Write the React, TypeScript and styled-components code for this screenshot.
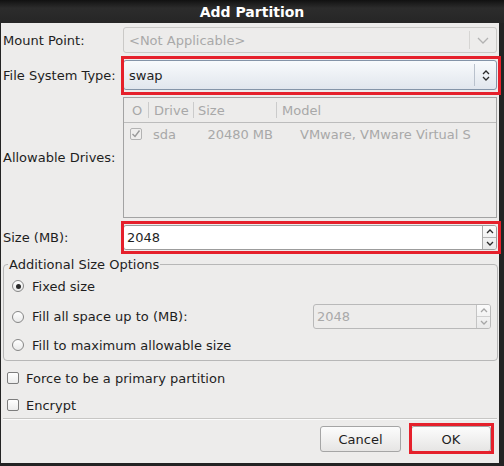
import styled, { createGlobalStyle, css } from "styled-components";

const GlobalStyle = createGlobalStyle`
  html, body {
    margin: 0;
    padding: 0;
    background: #1c1c1c;
  }
  body {
    font-family: "DejaVu Sans", "Noto Sans", sans-serif;
    font-size: 13px;
  }
`;

// red annotation box drawn over a control; inset is "top right bottom left"
const markedCss = (inset?: string) =>
  inset
    ? css`
        position: relative;
        &::after {
          content: "";
          position: absolute;
          inset: ${inset};
          border: 3px solid #e5202b;
          pointer-events: none;
        }
      `
    : "";

const Window = styled.div`
  width: 504px;
  height: 466px;
  box-sizing: border-box;
  display: flex;
  flex-direction: column;
  background: #232323;
  padding: 0 5px 3px 1px;
`;

const TitleBar = styled.div`
  height: 23px;
  flex: none;
  margin: 0 -5px 0 -1px;
  display: flex;
  align-items: center;
  justify-content: center;
  background: linear-gradient(#111111, #2c2c2c 35%, #262626);
  color: #ffffff;
  font-weight: bold;
  font-size: 14px;
`;

const Body = styled.div`
  flex: 1;
  display: flex;
  flex-direction: column;
  background: #edeceb;
  color: #1e1e1e;
  padding: 4px 2px 0 2px;
`;

const FormGrid = styled.div`
  display: grid;
  grid-template-columns: 120px 1fr;
  grid-template-rows: 26px 30px 121px 25px;
  row-gap: 7px;
`;

const Label = styled.div`
  display: flex;
  align-items: center;
  white-space: nowrap;
`;

const Combo = styled.div<{ $disabled?: boolean; $mark?: string }>`
  display: flex;
  align-items: stretch;
  box-sizing: border-box;
  border: 1px solid ${(p) => (p.$disabled ? "#cac9c7" : "#8494a8")};
  border-radius: 3px;
  background: ${(p) =>
    p.$disabled ? "#edeceb" : "linear-gradient(#f8fafc, #e1e6ed)"};
  color: ${(p) => (p.$disabled ? "#a9a9a9" : "#1e1e1e")};
  ${(p) => markedCss(p.$mark)}
`;

const ComboText = styled.div`
  flex: 1;
  display: flex;
  align-items: center;
  padding-left: 5px;
`;

const ComboArrow = styled.div<{ $width: number; $disabled?: boolean }>`
  width: ${(p) => p.$width}px;
  display: flex;
  align-items: center;
  justify-content: center;
  border-left: 1px solid ${(p) => (p.$disabled ? "#d6d5d3" : "#b9c1cc")};
  margin: 3px 0;
`;

const StackedArrows = styled.div`
  display: flex;
  flex-direction: column;
  gap: 1px;
`;

const Drives = styled.div`
  border: 1px solid #a3a3a3;
  background: #edeceb;
  color: #a8a8a8;
  display: flex;
  flex-direction: column;
`;

const DriveHeader = styled.div`
  height: 24px;
  display: grid;
  grid-template-columns: 24px 45px 83px 1fr;
  border-bottom: 1px solid #bcbcbc;
`;

const HeaderCell = styled.div<{ $first?: boolean; $pad?: number }>`
  display: flex;
  align-items: center;
  padding-left: ${(p) => p.$pad ?? 5}px;
  border-left: ${(p) => (p.$first ? "none" : "1px solid #cbcbcb")};
  margin: 4px 0;
`;

const DriveRow = styled.div`
  height: 22px;
  display: grid;
  grid-template-columns: 24px 45px 83px 1fr;
  align-items: center;
`;

const RowCell = styled.div<{ $align?: string; $pad?: number }>`
  display: flex;
  justify-content: ${(p) => p.$align ?? "flex-start"};
  padding-left: ${(p) => p.$pad ?? 5}px;
  padding-right: ${(p) => (p.$align === "flex-end" ? 3 : 0)}px;
  white-space: nowrap;
  overflow: hidden;
`;

const CheckBox = styled.div<{ $disabled?: boolean }>`
  width: 12px;
  height: 12px;
  box-sizing: border-box;
  border: 1px solid ${(p) => (p.$disabled ? "#b3b3b3" : "#7d7d7d")};
  border-radius: 2px;
  background: ${(p) =>
    p.$disabled ? "#efeeed" : "linear-gradient(#ffffff, #ececec)"};
  display: flex;
  align-items: center;
  justify-content: center;
  flex: none;
`;

const Spin = styled.div<{ $disabled?: boolean; $mark?: string }>`
  display: flex;
  box-sizing: border-box;
  border: 1px solid ${(p) => (p.$disabled ? "#b9b9b9" : "#9c9c9c")};
  border-radius: 3px;
  background: ${(p) => (p.$disabled ? "#edeceb" : "#ffffff")};
  color: ${(p) => (p.$disabled ? "#a9a9a9" : "#1e1e1e")};
  ${(p) => markedCss(p.$mark)}
`;

const SpinText = styled.div`
  flex: 1;
  display: flex;
  align-items: center;
  padding-left: 3px;
`;

const SpinButtons = styled.div<{ $disabled?: boolean }>`
  width: 13px;
  display: flex;
  flex-direction: column;
  border-left: 1px solid ${(p) => (p.$disabled ? "#c4c4c4" : "#a9a9a9")};
  background: linear-gradient(#fbfbfb, #e9e9e9);
  border-radius: 0 2px 2px 0;
`;

const SpinButton = styled.div<{ $top?: boolean; $disabled?: boolean }>`
  flex: 1;
  display: flex;
  align-items: center;
  justify-content: center;
  border-bottom: ${(p) =>
    p.$top ? `1px solid ${p.$disabled ? "#d0d0d0" : "#b4b4b4"}` : "none"};
`;

const Frame = styled.fieldset`
  margin: 7px -1px 0 0;
  border: 1px solid #b7b7b7;
  border-radius: 4px;
  padding: 4px 6px 5px 8px;
  display: flex;
  flex-direction: column;
`;

const Legend = styled.legend`
  padding: 0 1px;
  margin-left: -4px;
  line-height: 15px;
  color: #1e1e1e;
`;

const OptionRow = styled.div<{ $height?: number; $space?: number }>`
  height: ${(p) => p.$height ?? 20}px;
  margin-top: ${(p) => p.$space ?? 0}px;
  display: flex;
  align-items: center;
  gap: 8px;
  white-space: nowrap;
`;

const Radio = styled.div<{ $checked?: boolean }>`
  width: 12px;
  height: 12px;
  box-sizing: border-box;
  border-radius: 50%;
  border: 1px solid #868686;
  background: linear-gradient(#ffffff, #e9e9e9);
  display: flex;
  align-items: center;
  justify-content: center;
  flex: none;
  &::after {
    content: "";
    width: 5px;
    height: 5px;
    border-radius: 50%;
    background: ${(p) => (p.$checked ? "#2a2a2a" : "transparent")};
  }
`;

const LimitSpin = styled(Spin)`
  margin-left: auto;
  width: 178px;
  height: 25px;
`;

const CheckList = styled.div`
  margin-top: 7px;
  display: flex;
  flex-direction: column;
  gap: 7px;
`;

const CheckRow = styled.div`
  height: 20px;
  display: flex;
  align-items: center;
  gap: 7px;
  padding-left: 4px;
`;

const Separator = styled.div`
  margin-top: 3px;
  border-top: 1px solid #c7c6c4;
  border-bottom: 1px solid #fbfbfb;
`;

const ButtonRow = styled.div`
  margin-top: 6px;
  display: flex;
  justify-content: flex-end;
  gap: 10px;
  padding-right: 6px;
`;

const Button = styled.button<{ $width: number; $mark?: string }>`
  width: ${(p) => p.$width}px;
  height: 26px;
  box-sizing: border-box;
  border: 1px solid #a5a5a5;
  border-radius: 3px;
  background: linear-gradient(#fcfcfc, #e6e5e4);
  font: inherit;
  color: #1e1e1e;
  padding: 0;
  ${(p) => markedCss(p.$mark)}
`;

function Chevron(props: { up?: boolean; color: string; w?: number; h?: number }) {
  const w = props.w ?? 7;
  const h = props.h ?? 4;
  return (
    <svg width={w + 2} height={h + 2} viewBox={`-1 -1 ${w + 2} ${h + 2}`}>
      <path
        d={props.up ? `M0 ${h} L${w / 2} 0 L${w} ${h}` : `M0 0 L${w / 2} ${h} L${w} 0`}
        fill="none"
        stroke={props.color}
        strokeWidth="1.3"
      />
    </svg>
  );
}

function CheckMark(props: { color: string }) {
  return (
    <svg width="10" height="10" viewBox="0 0 10 10">
      <path d="M1.5 5 L4 7.5 L8.5 1.5" fill="none" stroke={props.color} strokeWidth="1.4" />
    </svg>
  );
}

export default function App() {
  return (
    <Window>
      <GlobalStyle />
      <TitleBar>Add Partition</TitleBar>
      <Body>
        <FormGrid>
          <Label>Mount Point:</Label>
          <Combo $disabled>
            <ComboText>&lt;Not Applicable&gt;</ComboText>
            <ComboArrow $width={26} $disabled>
              <Chevron color="#b2b2b2" w={10} h={5} />
            </ComboArrow>
          </Combo>

          <Label>File System Type:</Label>
          <Combo $mark="-5px -5px -6px -3px">
            <ComboText>swap</ComboText>
            <ComboArrow $width={21}>
              <StackedArrows>
                <Chevron up color="#2a2a2a" w={6} h={3} />
                <Chevron color="#2a2a2a" w={6} h={3} />
              </StackedArrows>
            </ComboArrow>
          </Combo>

          <Label>Allowable Drives:</Label>
          <Drives>
            <DriveHeader>
              <HeaderCell $first $pad={8}>O</HeaderCell>
              <HeaderCell>Drive</HeaderCell>
              <HeaderCell $pad={4}>Size</HeaderCell>
              <HeaderCell>Model</HeaderCell>
            </DriveHeader>
            <DriveRow>
              <RowCell $pad={6}>
                <CheckBox $disabled>
                  <CheckMark color="#9a9a9a" />
                </CheckBox>
              </RowCell>
              <RowCell>sda</RowCell>
              <RowCell $align="flex-end" $pad={0}>20480 MB</RowCell>
              <RowCell $pad={24}>VMware, VMware Virtual S</RowCell>
            </DriveRow>
          </Drives>

          <Label>Size (MB):</Label>
          <Spin $mark="-5px -5px -5px -3px">
            <SpinText>2048</SpinText>
            <SpinButtons>
              <SpinButton $top>
                <Chevron up color="#2a2a2a" w={6} h={3} />
              </SpinButton>
              <SpinButton>
                <Chevron color="#2a2a2a" w={6} h={3} />
              </SpinButton>
            </SpinButtons>
          </Spin>
        </FormGrid>

        <Frame>
          <Legend>Additional Size Options</Legend>
          <OptionRow>
            <Radio $checked />
            Fixed size
          </OptionRow>
          <OptionRow $height={25} $space={8}>
            <Radio />
            Fill all space up to (MB):
            <LimitSpin $disabled>
              <SpinText>2048</SpinText>
              <SpinButtons $disabled>
                <SpinButton $top $disabled>
                  <Chevron up color="#a6a6a6" w={6} h={3} />
                </SpinButton>
                <SpinButton $disabled>
                  <Chevron color="#a6a6a6" w={6} h={3} />
                </SpinButton>
              </SpinButtons>
            </LimitSpin>
          </OptionRow>
          <OptionRow $space={6}>
            <Radio />
            Fill to maximum allowable size
          </OptionRow>
        </Frame>

        <CheckList>
          <CheckRow>
            <CheckBox />
            Force to be a primary partition
          </CheckRow>
          <CheckRow>
            <CheckBox />
            Encrypt
          </CheckRow>
        </CheckList>

        <Separator />

        <ButtonRow>
          <Button $width={81}>Cancel</Button>
          <Button $width={80} $mark="-4px -4px -3px -3px">OK</Button>
        </ButtonRow>
      </Body>
    </Window>
  );
}
